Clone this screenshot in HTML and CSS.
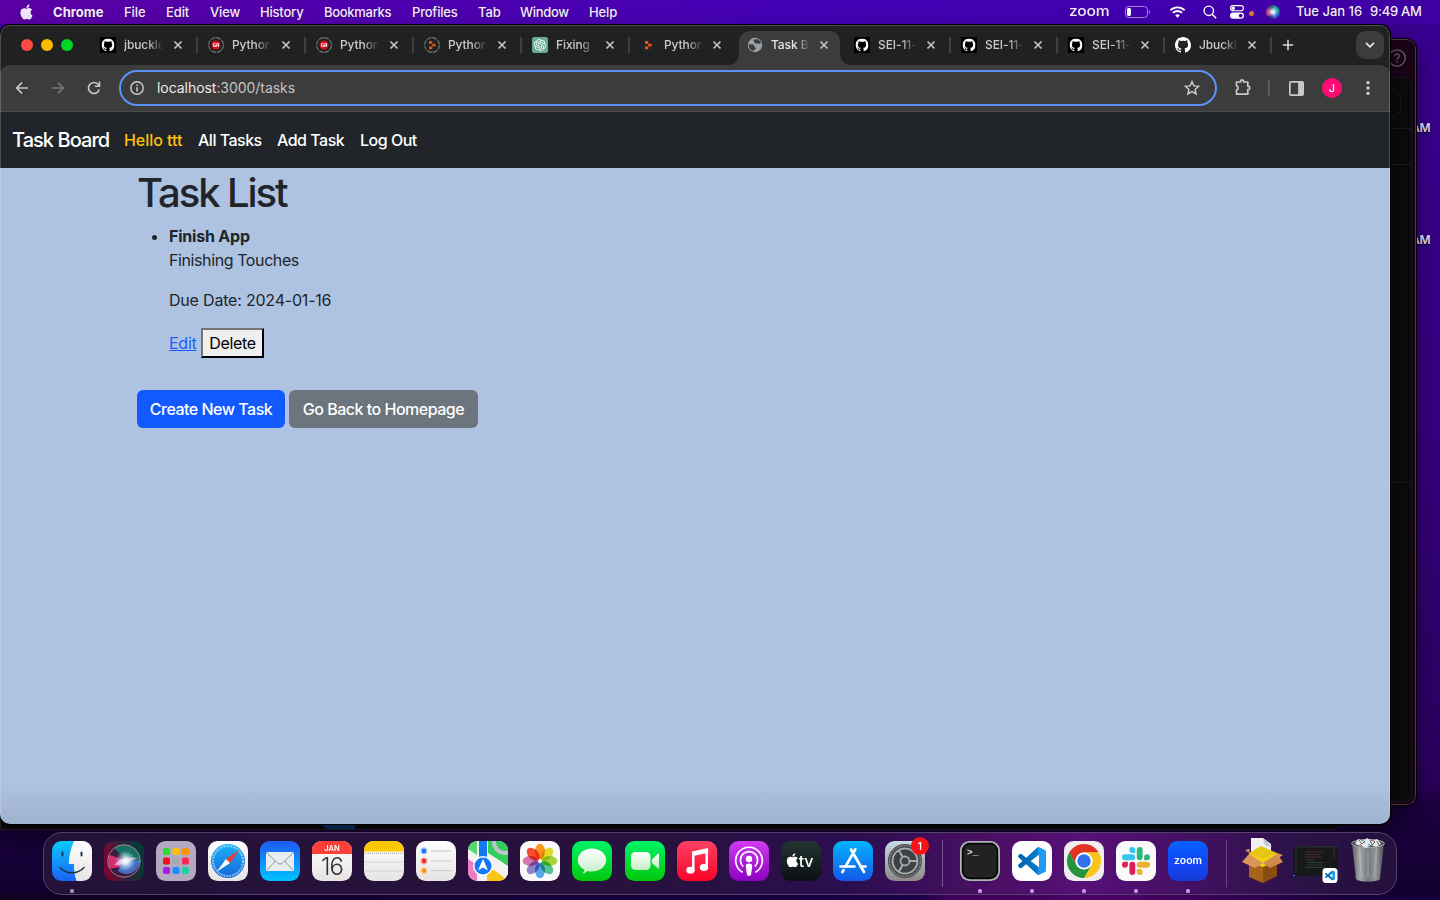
FILE: index.html
```html
<!DOCTYPE html>
<html lang="en">
<head>
<meta charset="utf-8">
<title>Task Board</title>
<link rel="stylesheet" href="styles.css">
</head>
<body>
<svg class="defs" width="0" height="0" aria-hidden="true">
  <defs>
    <symbol id="apple" viewBox="0 0 24 24"><path d="M12.152 6.896c-.948 0-2.415-1.078-3.96-1.04-2.04.027-3.91 1.183-4.961 3.014-2.117 3.675-.546 9.103 1.519 12.09 1.013 1.454 2.208 3.09 3.792 3.039 1.52-.065 2.09-.987 3.935-.987 1.831 0 2.35.987 3.96.948 1.637-.026 2.676-1.48 3.676-2.948 1.156-1.688 1.636-3.325 1.662-3.415-.039-.013-3.182-1.221-3.22-4.857-.026-3.04 2.48-4.494 2.597-4.559-1.429-2.09-3.623-2.324-4.39-2.376-2-.156-3.675 1.09-4.61 1.09zM15.53 3.83c.843-1.012 1.4-2.427 1.245-3.83-1.207.052-2.662.805-3.532 1.818-.78.896-1.454 2.338-1.273 3.714 1.338.104 2.715-.688 3.559-1.701"/></symbol>
    <symbol id="github" viewBox="0 0 16 16"><path d="M8 0C3.58 0 0 3.58 0 8c0 3.54 2.29 6.53 5.47 7.59.4.07.55-.17.55-.38 0-.19-.01-.82-.01-1.49-2.01.37-2.53-.49-2.69-.94-.09-.23-.48-.94-.82-1.13-.28-.15-.68-.52-.01-.53.63-.01 1.08.58 1.23.82.72 1.21 1.87.87 2.33.66.07-.52.28-.87.51-1.07-1.78-.2-3.64-.89-3.64-3.95 0-.87.31-1.59.82-2.15-.08-.2-.36-1.02.08-2.12 0 0 .67-.21 2.2.82.64-.18 1.32-.27 2-.27.68 0 1.36.09 2 .27 1.53-1.04 2.2-.82 2.2-.82.44 1.1.16 1.92.08 2.12.51.56.82 1.27.82 2.15 0 3.07-1.87 3.75-3.65 3.95.29.25.54.73.54 1.48 0 1.07-.01 1.93-.01 2.2 0 .21.15.46.55.38A8.013 8.013 0 0016 8c0-4.42-3.58-8-8-8z"/></symbol>
    <symbol id="gh-tile" viewBox="0 0 16 16"><rect width="16" height="16" fill="#000"/><svg x="1.5" y="1.5" width="13" height="13" viewBox="0 0 16 16"><use href="#github" fill="#fff"/></svg></symbol>
    <symbol id="ga" viewBox="0 0 16 16"><circle cx="8" cy="8" r="7.4" fill="none" stroke="#747775" stroke-width="1.1" stroke-dasharray="4.9 .91"/><circle cx="8" cy="8" r="4.500" fill="#d8101c"/><path d="M7.4 6.6H5.6v2.9h1.9V8.2H6.7M8.7 9.9V6.5h1.8v3.4M8.7 8.4h1.8" fill="none" stroke="#fff" stroke-width=".8"/></symbol>
    <symbol id="replit" viewBox="0 0 16 16"><path d="M5 4h3.2v2.8H5zM8.2 6.8h3.3v2.7H8.2zM5 9.5h3.2v2.8H5z"/></symbol>
    <symbol id="replit-load" viewBox="0 0 16 16"><circle cx="8" cy="8" r="7.4" fill="none" stroke="#747775" stroke-width="1.1" stroke-dasharray="4.9 .91"/><use href="#replit" fill="#d9560f"/></symbol>
    <symbol id="replit-dark" viewBox="0 0 16 16"><circle cx="8" cy="8" r="7.8" fill="#222325"/><use href="#replit" fill="#f2560d"/></symbol>
    <symbol id="openai" viewBox="-4 -4 32 32"><rect x="-4" y="-4" width="32" height="32" rx="5" fill="#6aab98"/><path fill="#fff" d="M22.2819 9.8211a5.9847 5.9847 0 0 0-.5157-4.9108 6.0462 6.0462 0 0 0-6.5098-2.9A6.0651 6.0651 0 0 0 4.9807 4.1818a5.9847 5.9847 0 0 0-3.9977 2.9 6.0462 6.0462 0 0 0 .7427 7.0966 5.98 5.98 0 0 0 .511 4.9107 6.051 6.051 0 0 0 6.5146 2.9001A5.9847 5.9847 0 0 0 13.2599 24a6.0557 6.0557 0 0 0 5.7718-4.2058 5.9894 5.9894 0 0 0 3.9977-2.9001 6.0557 6.0557 0 0 0-.7475-7.0729zm-9.022 12.6081a4.4755 4.4755 0 0 1-2.8764-1.0408l.1419-.0804 4.7783-2.7582a.7948.7948 0 0 0 .3927-.6813v-6.7369l2.02 1.1686a.071.071 0 0 1 .038.052v5.5826a4.504 4.504 0 0 1-4.4945 4.4944zm-9.6607-4.1254a4.4708 4.4708 0 0 1-.5346-3.0137l.142.0852 4.783 2.7582a.7712.7712 0 0 0 .7806 0l5.8428-3.3685v2.3324a.0804.0804 0 0 1-.0332.0615L9.74 19.9502a4.4992 4.4992 0 0 1-6.1408-1.6464zM2.3408 7.8956a4.485 4.485 0 0 1 2.3655-1.9728V11.6a.7664.7664 0 0 0 .3879.6765l5.8144 3.3543-2.0201 1.1685a.0757.0757 0 0 1-.071 0l-4.8303-2.7865A4.504 4.504 0 0 1 2.3408 7.872zm16.5963 3.8558L13.1038 8.364 15.1192 7.2a.0757.0757 0 0 1 .071 0l4.8303 2.7913a4.4944 4.4944 0 0 1-.6765 8.1042v-5.6772a.79.79 0 0 0-.407-.667zm2.0107-3.0231l-.142-.0852-4.7735-2.7818a.7759.7759 0 0 0-.7854 0L9.409 9.2297V6.8974a.0662.0662 0 0 1 .0284-.0615l4.8303-2.7866a4.4992 4.4992 0 0 1 6.6802 4.66zM8.3065 12.863l-2.02-1.1638a.0804.0804 0 0 1-.038-.0567V6.0742a4.4992 4.4992 0 0 1 7.3757-3.4537l-.142.0805L8.704 5.459a.7948.7948 0 0 0-.3927.6813zm1.0976-2.3654l2.602-1.4998 2.6069 1.4998v2.9994l-2.5974 1.4997-2.6067-1.4997Z"/></symbol>
    <symbol id="globe" viewBox="0 0 16 16"><circle cx="8" cy="8" r="7.2" fill="#9aa0a8"/><path d="M8.700 2.200c-2 0-2.800 1-1.600 2.200 1 1 0 1.800 1.300 2.300 1.300.4 1.200-.9 2.600-.2 1 .6 1.500.1 2.700.3l-.3-2.200-2.200-2z" fill="#3c3c3c"/><path d="M2 6.900c1.500.7 4.700.1 5.300 1.600.3 1-.2 1.400.9 1.900 1.200.6.300 1.900-.5 2.200-.8.500-.4 1.300-1.200 1.500C3.700 13.300 1.900 11 1.800 8.200z" fill="#3c3c3c"/></symbol>
    <symbol id="close" viewBox="0 0 10 10"><path d="M1.5 1.5l7 7M8.5 1.5l-7 7" stroke="#c7c7c7" stroke-width="1.6" fill="none"/></symbol>
    <linearGradient id="vsg" x1="0" x2="1"><stop offset="0" stop-color="#0065a9"/><stop offset=".68" stop-color="#007acc"/><stop offset=".76" stop-color="#1f9cf0"/></linearGradient>
    <symbol id="vscode" viewBox="0 0 24 24"><path fill="url(#vsg)" d="M23.15 2.587L18.21.21a1.494 1.494 0 0 0-1.705.29l-9.46 8.63-4.12-3.128a.999.999 0 0 0-1.276.057L.327 7.261A1 1 0 0 0 .326 8.74L3.899 12 .326 15.26a1 1 0 0 0 .001 1.479L1.65 17.94a.999.999 0 0 0 1.276.057l4.12-3.128 9.46 8.63a1.492 1.492 0 0 0 1.704.29l4.942-2.377A1.5 1.5 0 0 0 24 20.06V3.939a1.5 1.5 0 0 0-.85-1.352zm-5.146 14.861L10.826 12l7.178-5.448v10.896z"/></symbol>
    <radialGradient id="siriOrb"><stop offset="0" stop-color="#fff"/><stop offset=".3" stop-color="#b9d9f5"/><stop offset=".65" stop-color="#8a5fb0" stop-opacity=".6"/><stop offset="1" stop-color="#222" stop-opacity="0"/></radialGradient>
    <radialGradient id="siriGlow"><stop offset="0" stop-color="#fff"/><stop offset=".3" stop-color="#e8fbff" stop-opacity=".85"/><stop offset="1" stop-color="#9fe4ff" stop-opacity="0"/></radialGradient>
    <linearGradient id="siriBg" x1="0" x2="1" y1=".3" y2=".1"><stop offset="0" stop-color="#7c0530"/><stop offset=".5" stop-color="#25283a"/><stop offset="1" stop-color="#013c36"/></linearGradient>
    <linearGradient id="lightV" x1="0" x2="0" y1="0" y2="1"><stop offset="0" stop-color="#fff"/><stop offset="1" stop-color="#e6e4e2"/></linearGradient>
    <linearGradient id="finderB" x1="0" x2="0" y1="0" y2="1"><stop offset="0" stop-color="#08c8fb"/><stop offset="1" stop-color="#1a63f7"/></linearGradient>
    <linearGradient id="safariB" x1="0" x2="0" y1="0" y2="1"><stop offset="0" stop-color="#1ab0f5"/><stop offset="1" stop-color="#1268dc"/></linearGradient>
    <linearGradient id="mailB" x1="0" x2="0" y1="0" y2="1"><stop offset="0" stop-color="#1e5bf3"/><stop offset="1" stop-color="#02c1fd"/></linearGradient>
    <linearGradient id="greenV" x1="0" x2="0" y1="0" y2="1"><stop offset="0" stop-color="#00f468"/><stop offset="1" stop-color="#02c80d"/></linearGradient>
    <linearGradient id="musicV" x1="0" x2="0" y1="0" y2="1"><stop offset="0" stop-color="#fd4263"/><stop offset="1" stop-color="#fa0328"/></linearGradient>
    <linearGradient id="podV" x1="0" x2="0" y1="0" y2="1"><stop offset="0" stop-color="#d23bf3"/><stop offset="1" stop-color="#8a02c0"/></linearGradient>
    <linearGradient id="tvV" x1="0" x2="0" y1="0" y2="1"><stop offset="0" stop-color="#243533"/><stop offset="1" stop-color="#0b1011"/></linearGradient>
    <linearGradient id="storeV" x1="0" x2="0" y1="0" y2="1"><stop offset="0" stop-color="#01b4fb"/><stop offset="1" stop-color="#1458ec"/></linearGradient>
    <linearGradient id="setV" x1="0" x2="0" y1="0" y2="1"><stop offset="0" stop-color="#c8dbe5"/><stop offset="1" stop-color="#8e8886"/></linearGradient>
    <linearGradient id="zoomV" x1="0" x2="0" y1="0" y2="1"><stop offset="0" stop-color="#0563fc"/><stop offset=".5" stop-color="#1148fa"/><stop offset="1" stop-color="#163ad6"/></linearGradient>
    <linearGradient id="canV" x1="0" x2="1"><stop offset="0" stop-color="#5c6064"/><stop offset=".25" stop-color="#a4a8aa"/><stop offset=".5" stop-color="#74787b"/><stop offset=".75" stop-color="#93979a"/><stop offset="1" stop-color="#4c5054"/></linearGradient>
    <linearGradient id="bubbleV" x1="0" x2="0" y1="0" y2="1"><stop offset="0" stop-color="#fff"/><stop offset="1" stop-color="#c3efc5"/></linearGradient>
    <clipPath id="tile"><rect width="40" height="40" rx="9.5"/></clipPath>
    <clipPath id="orb"><circle cx="20" cy="20" r="16.500"/></clipPath>
    <path id="chromeSeg" d="M0-8.5H14.72A17 17 0 0 0-14.72-8.5L-7.36 4.25A8.5 8.5 0 0 1 0-8.5Z"/>
    <path id="slackArm" d="M8.834 6.313a2.528 2.528 0 0 1 2.521 2.521 2.528 2.528 0 0 1-2.521 2.522H2.522A2.528 2.528 0 0 1 0 8.834a2.528 2.528 0 0 1 2.522-2.521h6.312zM8.834 5.042a2.528 2.528 0 0 1-2.521-2.52A2.528 2.528 0 0 1 8.834 0a2.528 2.528 0 0 1 2.521 2.522v2.52H8.834z"/>
  </defs>
</svg>

<div class="desktop">
  <span class="file-label file-label-1">AM</span>
  <span class="file-label file-label-2">AM</span>

  <div class="slack-window">
    <svg class="help" viewBox="0 0 18 18"><circle cx="9" cy="9" r="8.2" fill="none" stroke="#6d6469" stroke-width="1.3"/><path d="M6.700 7.200a2.300 2.300 0 1 1 3.500 1.900c-.8.500-1.200.8-1.200 1.700" fill="none" stroke="#6d6469" stroke-width="1.3"/><circle cx="9" cy="12.8" r=".9" fill="#6d6469"/></svg>
    <div class="slack-pane"><i class="pane-a"></i><i class="pane-b"></i><i class="pane-c"></i></div>
  </div>
  <div class="under-window"><i></i></div>

  <header class="menubar">
    <svg class="apple-logo" fill="#efe6fa"><use href="#apple"/></svg>
    <nav class="menus">
      <b class="m-chrome">Chrome</b><span class="m-file">File</span><span class="m-edit">Edit</span><span class="m-view">View</span><span class="m-history">History</span><span class="m-bookmarks">Bookmarks</span><span class="m-profiles">Profiles</span><span class="m-tab">Tab</span><span class="m-window">Window</span><span class="m-help">Help</span>
    </nav>
    <div class="status">
      <span class="zoom-word"><span>zoom</span></span>
      <svg class="battery" viewBox="0 0 26 12"><rect x=".5" y=".5" width="22" height="11" rx="3.2" fill="none" stroke="#a287dc"/><rect x="2" y="2" width="4" height="8" rx="1.4" fill="#fff"/><path d="M24 4v4c1.3-.4 1.3-3.600 0-4z" fill="#a287dc"/></svg>
      <svg class="wifi" viewBox="0 0 16 12"><path d="M.9 4.300a10.200 10.200 0 0 1 14.200 0M3.400 6.900a6.600 6.600 0 0 1 9.200 0" fill="none" stroke="#fff" stroke-width="1.900"/><path d="M8 11.800 5.700 9.400a3.300 3.300 0 0 1 4.600 0z" fill="#fff"/></svg>
      <svg class="search" viewBox="0 0 14 14"><circle cx="5.800" cy="5.800" r="4.700" fill="none" stroke="#fff" stroke-width="1.400"/><path d="m9.200 9.200 4 4" stroke="#fff" stroke-width="1.600"/></svg>
      <svg class="control" viewBox="0 0 14 14"><rect x=".600" y=".600" width="12.800" height="5.200" rx="2.600" fill="none" stroke="#fff" stroke-width="1.100"/><circle cx="3.300" cy="3.200" r="1.700" fill="#fff"/><rect y="7.400" width="14" height="6.400" rx="3.200" fill="#fff"/><circle cx="10.700" cy="10.600" r="1.900" fill="#4600ad"/></svg>
      <i class="mic-dot"></i>
      <svg class="siri-mini" viewBox="0 0 14 14"><circle cx="7" cy="7" r="6.800" fill="#38307d"/><path d="M7 7 1.500 3A6.800 6.800 0 0 1 7 .200z" fill="#4b4a78"/><path d="M7 7V.200A6.800 6.800 0 0 1 13.800 7z" fill="#0f9f9a"/><path d="M7 7l-5 4.500A6.800 6.800 0 0 1 1.500 3z" fill="#d03a8c"/><path d="M7 7h6.800A6.800 6.800 0 0 1 7 13.800z" fill="#2d63c9"/><circle cx="7" cy="7" r="5.500" fill="url(#siriGlow)"/></svg>
      <span class="date">Tue Jan 16</span><span class="time">9:49 AM</span>
    </div>
  </header>

  <main class="browser">
    <div class="tabstrip">
      <div class="lights"><i class="red"></i><i class="yellow"></i><i class="green"></i></div>
      <div class="tabs">
        <div class="tab wide"><svg class="fav"><use href="#gh-tile"/></svg><span class="title">jbuckle</span><svg class="x"><use href="#close"/></svg></div>
        <div class="tab wide"><svg class="fav"><use href="#ga"/></svg><span class="title">Python</span><svg class="x"><use href="#close"/></svg></div>
        <div class="tab wide"><svg class="fav"><use href="#ga"/></svg><span class="title">Python</span><svg class="x"><use href="#close"/></svg></div>
        <div class="tab wide"><svg class="fav"><use href="#replit-load"/></svg><span class="title">Python</span><svg class="x"><use href="#close"/></svg></div>
        <div class="tab wide"><svg class="fav"><use href="#openai"/></svg><span class="title">Fixing</span><svg class="x"><use href="#close"/></svg></div>
        <div class="tab plain"><svg class="fav"><use href="#replit-dark"/></svg><span class="title">Python</span><svg class="x"><use href="#close"/></svg></div>
        <div class="tab active"><svg class="fav"><use href="#globe"/></svg><span class="title">Task B</span><svg class="x"><use href="#close"/></svg></div>
        <div class="tab"><svg class="fav"><use href="#gh-tile"/></svg><span class="title">SEI-11-</span><svg class="x"><use href="#close"/></svg></div>
        <div class="tab"><svg class="fav"><use href="#gh-tile"/></svg><span class="title">SEI-11-</span><svg class="x"><use href="#close"/></svg></div>
        <div class="tab"><svg class="fav"><use href="#gh-tile"/></svg><span class="title">SEI-11-</span><svg class="x"><use href="#close"/></svg></div>
        <div class="tab"><svg class="fav" fill="#fff"><use href="#github"/></svg><span class="title">Jbuckl</span><svg class="x"><use href="#close"/></svg></div>
      </div>
      <svg class="plus" viewBox="0 0 12 12"><path d="M6 .800v10.400M.800 6h10.400" stroke="#d5d5d5" stroke-width="1.600"/></svg>
      <div class="tab-search"><svg viewBox="0 0 10 6"><path d="m1 .800 4 4 4-4" fill="none" stroke="#e3e3e3" stroke-width="1.800"/></svg></div>
    </div>
    <div class="toolbar">
      <svg class="ti back" viewBox="0 0 16 16"><path d="M14 8H2.800M8 2.600 2.600 8 8 13.400" fill="none" stroke="#c9c9c9" stroke-width="1.600"/></svg>
      <svg class="ti fwd" viewBox="0 0 16 16"><path d="M2 8h11.200M8 2.600 13.400 8 8 13.400" fill="none" stroke="#777" stroke-width="1.600"/></svg>
      <svg class="ti reload" viewBox="0 0 16 16"><path d="M13.300 9.400a5.500 5.500 0 1 1-1.300-5.200l1.300 1.300" fill="none" stroke="#c9c9c9" stroke-width="1.600"/><path d="M13.500 1.600v4.600H8.900" fill="none" stroke="#c9c9c9" stroke-width="1.600"/></svg>
      <div class="omnibox">
        <svg class="info" viewBox="0 0 14 14"><circle cx="7" cy="7" r="6.200" fill="none" stroke="#d0d0d0" stroke-width="1.400"/><path d="M7 6.200v4.200M7 3.500v1.500" stroke="#d0d0d0" stroke-width="1.500"/></svg>
        <span class="url"><em>localhost</em>:3000/tasks</span>
        <svg class="star" viewBox="0 0 16 16"><path d="m8 1.600 1.900 4.300 4.700.400-3.500 3.100 1 4.600L8 11.600 3.900 14l1-4.600-3.500-3.100 4.700-.400z" fill="none" stroke="#c9c9c9" stroke-width="1.500"/></svg>
      </div>
      <svg class="puzzle" viewBox="0 0 18 18"><path d="M2.500 4h4.100V3.200c0-1.800 3-1.800 3 0V4h4.200v4.300h.6c1.900 0 1.900 3.200 0 3.200h-.6v4.700H2.500v-4.400c2.400-.2 2.400-3.500 0-3.700z" fill="none" stroke="#c9c9c9" stroke-width="1.700" stroke-linejoin="round"/></svg>
      <i class="tb-sep"></i>
      <svg class="panel" viewBox="0 0 14 14"><rect x=".800" y=".800" width="12.400" height="12.400" rx="1" fill="none" stroke="#c9c9c9" stroke-width="1.600"/><path d="M8.500 1H13v12H8.500z" fill="#c9c9c9"/></svg>
      <span class="avatar">J</span>
      <svg class="dots" viewBox="0 0 4 16"><g fill="#d0d0d0"><circle cx="2" cy="2.600" r="1.700"/><circle cx="2" cy="8" r="1.700"/><circle cx="2" cy="13.400" r="1.700"/></g></svg>
    </div>
    <section class="page">
      <nav class="navbar">
        <a class="brand">Task Board</a><a class="hello">Hello ttt</a><a class="n-all">All Tasks</a><a class="n-add">Add Task</a><a class="n-out">Log Out</a>
      </nav>
      <div class="container">
        <h1>Task List</h1>
        <ul>
          <li>
            <strong>Finish App</strong>
            <p class="desc">Finishing Touches</p>
            <p class="due">Due Date: 2024-01-16</p>
            <div class="actions"><a class="edit">Edit</a><button class="delete">Delete</button></div>
          </li>
        </ul>
        <div class="buttons"><a class="btn primary">Create New Task</a><a class="btn secondary">Go Back to Homepage</a></div>
      </div>
    </section>
  </main>

  <footer class="dock">
    <div class="app run"><svg viewBox="0 0 40 40"><g clip-path="url(#tile)"><rect width="40" height="40" fill="url(#finderB)"/><path d="M22 0c-3 7-5 14-5.200 23H22c0 6 .5 12 2.500 17H40V0z" fill="url(#lightV)"/></g><path d="M10.500 11.500v3M29.500 11.500v3" stroke="#17304d" stroke-width="1.900" stroke-linecap="round"/><path d="M8 26.500c6 7 18 7 24 0" fill="none" stroke="#20303f" stroke-width="1.300" stroke-linecap="round"/></svg></div>
    <div class="app"><svg viewBox="0 0 40 40"><rect width="40" height="40" rx="9.500" fill="url(#siriBg)"/><g clip-path="url(#orb)"><rect width="40" height="40" fill="#3a1c3c"/><path d="M8 4h28v18C26 20 14 14 8 4z" fill="#0e8a6c" opacity=".75"/><path d="M4 14c6 0 12 4 17 7-4 5-9 7-16 6z" fill="#f0307a" opacity=".85"/><path d="M14 30c2-7 8-10 22-11-1 12-12 18-22 11z" fill="#4a86f0" opacity=".75"/><path d="M10 24c5-6 13-9 25-7-7 1-14 8-25 7z" fill="#ffb0d8" opacity=".8"/><circle cx="21.500" cy="20" r="10.500" fill="url(#siriGlow)"/></g><circle cx="20" cy="20" r="16.300" fill="none" stroke="#c08fa5" stroke-width=".8"/></svg></div>
    <div class="app"><svg viewBox="0 0 40 40"><rect width="40" height="40" rx="9.500" fill="#b2aac0"/><g><rect x="7" y="7" width="7" height="7" rx="1.800" fill="#28e02b"/><rect x="16.500" y="7" width="7" height="7" rx="1.800" fill="#ffc400"/><rect x="26" y="7" width="7" height="7" rx="1.800" fill="#ff9100"/><rect x="7" y="16.500" width="7" height="7" rx="1.800" fill="#f50f1c"/><rect x="16.500" y="16.500" width="7" height="7" rx="1.800" fill="#a6aaad"/><rect x="26" y="16.500" width="7" height="7" rx="1.800" fill="#ff2758"/><rect x="7" y="26" width="7" height="7" rx="1.800" fill="#a91ee0"/><rect x="16.500" y="26" width="7" height="7" rx="1.800" fill="#1b8dff"/><rect x="26" y="26" width="7" height="7" rx="1.800" fill="#1dd0a5"/></g></svg></div>
    <div class="app"><svg viewBox="0 0 40 40"><rect width="40" height="40" rx="9.500" fill="url(#lightV)"/><circle cx="20" cy="20" r="17" fill="url(#safariB)"/><circle cx="20" cy="20" r="15" fill="none" stroke="#fff" stroke-width="2.200" stroke-dasharray=".5 1.070"/><path d="M31.500 9 22 22l-4-4z" fill="#f5392f"/><path d="M8.500 31 18 18l4 4z" fill="#fff"/></svg></div>
    <div class="app"><svg viewBox="0 0 40 40"><rect width="40" height="40" rx="9.500" fill="url(#mailB)"/><rect x="6" y="11" width="28" height="19" rx="1.500" fill="#e8ecf0"/><path d="m6.500 11.500 11 10.500c1.500 1.300 3.500 1.300 5 0l11-10.500M6.500 29.500l9-9.500M33.500 29.500l-9-9.500" fill="none" stroke="#868d94" stroke-width=".9"/></svg></div>
    <div class="app"><svg viewBox="0 0 40 40"><g clip-path="url(#tile)"><rect width="40" height="40" fill="url(#lightV)"/><rect width="40" height="13" fill="#fa4038"/></g><text x="20" y="9.700" class="cal-m">JAN</text><text x="20" y="33.500" class="cal-d">16</text></svg></div>
    <div class="app"><svg viewBox="0 0 40 40"><g clip-path="url(#tile)"><rect width="40" height="40" fill="url(#lightV)"/><rect width="40" height="10.500" fill="#fdc700"/><path d="M0 12.300h40" stroke="#999" stroke-width="1" stroke-dasharray="1 1"/><path d="M0 21h40M0 30h40" stroke="#d1ceca" stroke-width=".8"/></g></svg></div>
    <div class="app"><svg viewBox="0 0 40 40"><rect width="40" height="40" rx="9.500" fill="url(#lightV)"/><path d="M15 10h20.500M15 20h20.500M15 29.700h20.500" stroke="#c7c7c7" stroke-width="1"/><g fill="#fff"><circle cx="8" cy="10" r="3.200" stroke="#a4c6f2"/><circle cx="8" cy="20" r="3.200" stroke="#f0a4a4"/><circle cx="8" cy="29.700" r="3.200" stroke="#f4cc99"/></g><circle cx="8" cy="10" r="2.400" fill="#1479f5"/><circle cx="8" cy="20" r="2.400" fill="#f42b2b"/><circle cx="8" cy="29.700" r="2.400" fill="#f9931c"/></svg></div>
    <div class="app"><svg viewBox="0 0 40 40"><g clip-path="url(#tile)"><rect width="40" height="40" fill="#f4f2ee"/><path d="M20 0h20v25L20 12z" fill="#30cf5b"/><path d="M0 8V0h9v14z" fill="#52da72"/><path d="M0 18l9 6v16H0z" fill="#ef7bc4"/><path d="M19 40V30l4-3 17 12v1z" fill="#fcc419"/><path d="M28 24l12 8v8L26 28z" fill="#f4f2ee"/><path d="M26 16 40 26v8L20 19z" fill="#f4f2ee"/><path d="M11 0h8v24h-8z" fill="#1578f3"/><circle cx="37" cy="1" r="11" fill="none" stroke="#bfc2c4" stroke-width="4"/></g><circle cx="15" cy="25" r="10" fill="#fff"/><circle cx="15" cy="25" r="8.500" fill="#1477fa"/><path d="m15 18 5 11.500-5-3-5 3z" fill="#fff"/></svg></div>
    <div class="app"><svg viewBox="0 0 40 40"><rect width="40" height="40" rx="9.500" fill="#fbfafa"/><g class="petals"><ellipse cx="20" cy="10.500" rx="5" ry="7.800" fill="#ff9a1e"/><ellipse cx="20" cy="10.500" rx="5" ry="7.800" fill="#e5df25" transform="rotate(45 20 20)"/><ellipse cx="20" cy="10.500" rx="5" ry="7.800" fill="#a7d93a" transform="rotate(90 20 20)"/><ellipse cx="20" cy="10.500" rx="5" ry="7.800" fill="#55c794" transform="rotate(135 20 20)"/><ellipse cx="20" cy="10.500" rx="5" ry="7.800" fill="#5cabea" transform="rotate(180 20 20)"/><ellipse cx="20" cy="10.500" rx="5" ry="7.800" fill="#9286cf" transform="rotate(225 20 20)"/><ellipse cx="20" cy="10.500" rx="5" ry="7.800" fill="#d67bb5" transform="rotate(270 20 20)"/><ellipse cx="20" cy="10.500" rx="5" ry="7.800" fill="#fb4d35" transform="rotate(315 20 20)"/></g></svg></div>
    <div class="app"><svg viewBox="0 0 40 40"><rect width="40" height="40" rx="9.500" fill="url(#greenV)"/><path d="M20 7.500c8 0 14.200 5 14.200 11.500S28 30.500 20 30.500c-1.600 0-3-.200-4.400-.600-1.300 1.200-3 2.300-5 2.700 1.200-1.200 1.800-2.500 1.800-4C8.300 26.500 5.800 23 5.800 19 5.800 12.500 12 7.500 20 7.500z" fill="url(#bubbleV)"/></svg></div>
    <div class="app"><svg viewBox="0 0 40 40"><rect width="40" height="40" rx="9.500" fill="url(#greenV)"/><rect x="6" y="11" width="19.500" height="18" rx="4.500" fill="url(#bubbleV)"/><path d="M27 18.500l5.800-5.800c.6-.5 1.200-.3 1.200.5v13.600c0 .8-.6 1-1.200.5L27 22z" fill="url(#bubbleV)"/></svg></div>
    <div class="app"><svg viewBox="0 0 40 40"><rect width="40" height="40" rx="9.500" fill="url(#musicV)"/><path d="M15 10.500 31 7v4.800l-13.500 3V29h-2.500z" fill="#fff"/><path d="M28.500 9H31v17h-2.500z" fill="#fff"/><ellipse cx="13.500" cy="29.200" rx="4.200" ry="3.400" fill="#fff"/><ellipse cx="27" cy="26.500" rx="4.200" ry="3.400" fill="#fff"/></svg></div>
    <div class="app"><svg viewBox="0 0 40 40"><rect width="40" height="40" rx="9.500" fill="url(#podV)"/><g fill="none" stroke="#fff" stroke-width="1.700"><path d="M13.600 31.200a13.300 13.300 0 1 1 12.800 0"/><path d="M14.300 25.600a8.600 8.600 0 1 1 11.400 0"/></g><circle cx="20" cy="18" r="3.200" fill="#fff"/><path d="M16.800 25c0-3.200 6.400-3.200 6.400 0l-1 8c-.3 2.500-4.100 2.500-4.400 0z" fill="#fff"/></svg></div>
    <div class="app"><svg viewBox="0 0 40 40"><rect width="40" height="40" rx="9.500" fill="url(#tvV)"/><svg x="4.500" y="12" width="14" height="14.500" viewBox="0 0 24 24" fill="#fff"><use href="#apple"/></svg><text x="17.800" y="26.300" class="tv">tv</text></svg></div>
    <div class="app"><svg viewBox="0 0 40 40"><rect width="40" height="40" rx="9.500" fill="url(#storeV)"/><g fill="none" stroke="#fff" stroke-width="2.700" stroke-linecap="round"><path d="M18 8.500 31 31M22.300 8.500 12.500 25.500M7.500 25.500h14M27.500 25.500h5M10.500 29.200 9.400 31"/></g></svg></div>
    <div class="app"><svg viewBox="0 0 40 40"><rect width="40" height="40" rx="9.500" fill="url(#setV)"/><circle cx="20" cy="20" r="17" fill="#3c4144"/><circle cx="20" cy="20" r="15.500" fill="none" stroke="#8f9395" stroke-width="1.600" stroke-dasharray="1 .700"/><circle cx="20" cy="20" r="12.500" fill="none" stroke="#a5a9aa" stroke-width="2"/><circle cx="20" cy="20" r="4.500" fill="none" stroke="#a5a9aa" stroke-width="1.800"/><path d="M25 20h7M17.500 15.700l-4-6.900M17.500 24.300l-4 6.900" stroke="#a5a9aa" stroke-width="2.200"/></svg><b class="badge">1</b></div>
    <i class="sep sep-a"></i>
    <div class="app run"><svg viewBox="0 0 40 40"><rect width="40" height="40" rx="9.500" fill="#aeb4b6"/><rect x="1.800" y="1.800" width="36.400" height="36.400" rx="8" fill="#040404"/><rect x="3.500" y="3.500" width="33" height="33" rx="6" fill="#222"/><text x="7" y="14" class="term">&gt;_</text></svg></div>
    <div class="app run"><svg viewBox="0 0 40 40"><rect width="40" height="40" rx="9.500" fill="#fff"/><svg x="6" y="6" width="28" height="28" viewBox="0 0 24 24"><use href="#vscode"/></svg></svg></div>
    <div class="app run"><svg viewBox="0 0 40 40"><rect width="40" height="40" rx="9.500" fill="#efedee"/><g transform="translate(20 20)"><use href="#chromeSeg" fill="#e33325"/><use href="#chromeSeg" fill="#fcc31a" transform="rotate(120)"/><use href="#chromeSeg" fill="#23953f" transform="rotate(240)"/><circle r="8.500" fill="#fff"/><circle r="6.700" fill="#2f72ec"/></g></svg></div>
    <div class="app run"><svg viewBox="0 0 40 40"><rect width="40" height="40" rx="9.500" fill="#fbfafa"/><g transform="translate(6 6) scale(1.167)"><use href="#slackArm" fill="#36c5f0"/><use href="#slackArm" fill="#2eb67d" transform="rotate(90 12 12)"/><use href="#slackArm" fill="#ecb22e" transform="rotate(180 12 12)"/><use href="#slackArm" fill="#e01e5a" transform="rotate(270 12 12)"/></g></svg></div>
    <div class="app run"><svg viewBox="0 0 40 40"><rect width="40" height="40" rx="9.500" fill="url(#zoomV)"/><text x="20" y="22.800" class="zoom-app" textLength="28" lengthAdjust="spacingAndGlyphs">zoom</text></svg></div>
    <i class="sep sep-b"></i>
    <div class="app"><svg class="big" viewBox="0 0 44 48"><path d="M10 2h12l8 6v14H10z" fill="#eef0f2"/><path d="M22 2l2 7 7 2z" fill="#bcc1c6"/><path d="M8 23 22 29v18L8 41z" fill="#a8651a"/><path d="M22 29l14-7v18L22 47z" fill="#8b4d0f"/><path d="m8 17 12-7 16 7-14 9z" fill="#e8c512"/><path d="m8 17 14 6v8L8 26zM36 17l-14 6v8l14-7z" fill="#f2d31a"/><path d="M8 18 1 26l13 6 8-5z" fill="#d99758"/><path d="m36 18 6 8-13 6-7-5z" fill="#cf8a4a"/><path d="m36 17 6 2-6 4zM8 17l-4-3 5-1z" fill="#d99758"/></svg></div>
    <div class="app"><svg class="thumb" viewBox="0 0 46 40"><rect x="1" y="5" width="45" height="30" fill="#171819"/><path d="M1 5h45v1.500H1z" fill="#2a2b2d"/><path d="M4 8v24" stroke="#4b4d50" stroke-dasharray="1 1.500"/><path d="M13 11h18M13 13.500h15M13 16h17" stroke="#5c322e" stroke-width=".8"/><path d="M13 19h9M15 21.500h17M15 24h15M13 26.500h20" stroke="#2d4a31" stroke-width=".8"/><path d="M42 8v10" stroke="#6e4545" stroke-dasharray="1 1"/><rect x="1" y="34" width="2" height="1" fill="#0a84ff"/><rect x="30.500" y="27" width="15" height="15" rx="3.500" fill="#fff"/><svg x="33" y="29.500" width="10" height="10" viewBox="0 0 24 24"><use href="#vscode"/></svg></svg></div>
    <div class="app"><svg class="bin" viewBox="0 0 36 46"><path d="M2 6h32l-4 36c-2 3.500-22 3.500-24 0z" fill="url(#canV)"/><ellipse cx="18" cy="6.500" rx="16.500" ry="4" fill="#4b5053" stroke="#a7acae"/><path d="m5 7 3-5 5 2 4-3 5 3 5-2 4 5-5 3-5-2-5 3-5-2z" fill="#e6e8e9"/><path d="m9 3 3 4 3-3M20 3l2 5 3-3M27 4l2 4" stroke="#59656b" fill="none"/><path d="m10 7 2 2M23 4l2 1" stroke="#c54032"/><path d="m13 5 2 1M18 8l2-1" stroke="#2899bb"/><path d="M9 12l3 28M18 13v28M27 12l-3 28" stroke="#d5d8da" stroke-opacity=".25" stroke-width="2"/></svg></div>
  </footer>
</div>
</body>
</html>
```
FILE: styles.css
```css
* { box-sizing: border-box; }
body { margin: 0; font-family: Inter, "Liberation Sans", sans-serif; overflow: hidden; }
svg { display: block; flex: none; }
i { font-style: normal; }
.defs { position: absolute; }

.desktop {
  position: relative; width: 1440px; height: 900px; overflow: hidden;
  display: flex; flex-direction: column;
  background:
    linear-gradient(to top, #12002e 0, #1c0040 96px, transparent 112px),
    linear-gradient(180deg, #3a0092 0, #360082 45%, #2c0060 85%, #1a0036 100%);
}
.desktop::after {
  content: ""; position: absolute; left: 0; right: 0; bottom: 0; height: 5px;
  background: linear-gradient(90deg, #0f001e 0, #16003a 40%, #1c0046 64%, #3f005a 66%, #4a0064 78%, #1c0040 92%, #17003a 100%);
}
.file-label { position: absolute; left: 1411px; color: #ece4f5; font-size: 12px; font-weight: 600; line-height: 14px; text-shadow: 0 1px 2px #000; letter-spacing: -.2px; }
.file-label-1 { top: 121px; }
.file-label-2 { top: 233px; }

/* windows stacked behind the browser */
.slack-window {
  position: absolute; left: 900px; top: 38px; width: 517px; height: 768px;
  background: #1b0318; border: 1px solid #000; border-radius: 10px;
  box-shadow: inset 0 0 0 1px #4d3a4b, 0 8px 24px rgba(0,0,0,.45);
  padding: 38px 4px 3px 0;
}
.help { position: absolute; right: 10px; top: 10px; width: 18px; height: 18px; }
.slack-pane { height: 100%; background: #090b0d; border: 1px solid #1a171c; border-radius: 6px; padding-top: 11px; }
.slack-pane i { display: block; }
.pane-a { height: 28px; width: 499px; border: 1px solid #1a1b1d; border-radius: 8px; }
.pane-b { margin-top: 11px; height: 37px; border: solid #1a1b1d; border-width: 1px 0; }
.pane-c { margin-top: 317px; height: 1px; background: #1a1b1d; }
.under-window {
  position: absolute; left: 0; top: 800px; width: 1343px; height: 30px;
  background: #0a0a0b; border: 1px solid #29222f; border-radius: 0 0 10px 0;
}
.under-window i { position: absolute; left: 320px; bottom: 0; width: 34px; height: 20px; background: #073c73; border-radius: 0 0 0 8px; }

/* menu bar */
.menubar {
  height: 24px; display: flex; align-items: center; padding: 0 19px 1px 19px;
  background: linear-gradient(90deg, #5a00a4 0, #4f00ae 25%, #4400b4 55%, #4200ae 80%, #3f00a2 100%);
  color: #f4edfc; font-size: 13px; font-weight: 500; white-space: nowrap;
  text-shadow: 0 1px 2px rgba(0,0,0,.3);
}
.apple-logo { width: 15px; height: 16px; margin-right: 19px; }
.menus { display: flex; gap: 21px; letter-spacing: -.1px; }
.menus b { font-weight: 700; letter-spacing: .05px; }
.m-chrome { width: 50px; } .m-file { width: 21px; } .m-edit { width: 23px; } .m-view { width: 29px; }
.m-history { width: 43px; letter-spacing: -.2px; } .m-bookmarks { width: 67px; letter-spacing: -.3px; } .m-profiles { width: 45px; letter-spacing: -.2px; } .m-tab { width: 21px; } .m-window { width: 48px; letter-spacing: -.3px; }
.status { margin-left: auto; display: flex; align-items: center; padding-top: 1px; }
.zoom-word { width: 41px; font-size: 15px; line-height: 20px; margin: -3px 15px 0 0; letter-spacing: -.2px; }
.zoom-word span { display: inline-block; transform: scale(1.04, .92); transform-origin: 0 70%; }
.battery { width: 26px; height: 12px; margin-right: 18px; }
.wifi { width: 17px; height: 12px; margin-right: 18px; }
.search { width: 14px; height: 14px; margin: 0 12px 0 -1px; }
.control { width: 14px; height: 14px; margin: 0 5px 0 1px; }
.mic-dot { width: 5px; height: 5px; border-radius: 50%; background: #e07b20; margin: 2px 12px 0 0; }
.siri-mini { width: 14px; height: 14px; margin-right: 16px; }
.date { width: 74px; margin-top: -2px; }
.time { width: 51px; margin-top: -2px; letter-spacing: -.25px; }

/* browser window */
.browser {
  position: relative; width: 1390px; height: 799px; margin-top: 1px;
  display: flex; flex-direction: column; overflow: hidden;
  border-radius: 10px; background: #1f2020;
  box-shadow: 0 0 0 1px #000, 0 12px 24px rgba(0,0,0,.5);
}
.browser::after { content: ""; position: absolute; inset: 0; border-radius: 10px; border: 1px solid rgba(255,255,255,.2); border-bottom: 0; pointer-events: none; }
.tabstrip { height: 40px; display: flex; align-items: center; padding-left: 21px; background: #1f2221; }
.lights { display: flex; gap: 8px; width: 70px; }
.lights i { width: 12px; height: 12px; border-radius: 50%; }
.red { background: #ff4a42; } .yellow { background: #ffb900; } .green { background: #00d427; }
.tabs { display: flex; align-self: stretch; }
.tab { position: relative; width: 107px; display: flex; align-items: center; padding-left: 9px; color: #c9cbca; font-size: 12px; font-weight: 500; letter-spacing: -.1px; }
.tab.wide { width: 108px; }
.tab::after { content: ""; position: absolute; right: 1px; top: 12px; width: 2px; height: 16px; background: #3f4140; }
.tab.plain::after { display: none; }
.fav { width: 16px; height: 16px; }
.title { width: 45px; height: 16px; margin: 0 4px 0 8px; line-height: 16px; overflow: hidden; white-space: nowrap; -webkit-mask-image: linear-gradient(90deg, #000 24px, transparent 39px); mask-image: linear-gradient(90deg, #000 24px, transparent 39px); }
.wide .title { width: 46px; }
.x { width: 10px; height: 10px; margin-left: -1px; }
.tab.active { color: #e8e8e8; }
.tab.active::before { content: ""; position: absolute; left: 1px; top: 6px; width: 101px; height: 34px; background: #3c3c3c; border-radius: 10px 10px 0 0; z-index: 0; }
.tab.active::after { left: -9px; top: 30px; right: auto; width: 121px; height: 10px; background:
  radial-gradient(circle at 0 0, transparent 9.5px, #3c3c3c 10px) 0 0 / 10px 10px no-repeat,
  radial-gradient(circle at 100% 0, transparent 9.5px, #3c3c3c 10px) 100% 0 / 10px 10px no-repeat; }
.active > * { position: relative; z-index: 1; }
.plus { width: 12px; height: 12px; margin-left: 9px; }
.tab-search { width: 28px; height: 28px; margin: -1px 6px 0 auto; border-radius: 9px; background: #3c3c3c; display: flex; align-items: center; justify-content: center; }
.tab-search svg { width: 10px; height: 6px; margin-top: 1px; }
.toolbar { height: 47px; flex: none; display: flex; align-items: center; background: #3c3c3c; border-bottom: 1px solid #4b4c4c; border-radius: 10px 10px 0 0; padding: 0 20px 0 14px; }
.toolbar > * { flex: none; }
.ti { width: 16px; height: 16px; margin-right: 20px; }
.reload { margin-right: 17px; }
.omnibox { width: 1098px; height: 36px; border: 2px solid #5b92f5; border-radius: 18px; display: flex; align-items: center; padding: 0 15px 0 9px; }
.info { width: 14px; height: 14px; margin-right: 13px; }
.url { color: #c4c4c4; font-size: 14px; letter-spacing: -.05px; flex: 1; margin-top: -2px; }
.url em { color: #ececec; font-style: normal; }
.star { width: 16px; height: 16px; }
.puzzle { width: 18px; height: 18px; margin: -2px 16px 0 17px; }
.tb-sep { width: 2px; height: 16px; background: #5c5c5c; margin-right: 19px; }
.panel { width: 15px; height: 15px; margin-right: 18px; }
.avatar { width: 20px; height: 20px; border-radius: 50%; background: #ff0d77; color: #fff; font-size: 11px; line-height: 20px; text-align: center; margin-right: 22px; }
.dots { width: 4px; height: 16px; margin-left: 2px; }

/* task board page */
.page { flex: 1; background: linear-gradient(180deg, #aec3e2 94%, #9fb2cf 100%); color: #212529; font-size: 16px; line-height: 24px; }
.navbar { height: 56px; background: #212529; color: #fff; display: flex; align-items: center; padding-left: 12px; gap: 16px; white-space: nowrap; font-weight: 450; }
.brand { font-size: 20px; width: 96px; letter-spacing: -.95px; }
.hello { color: #ffc107; width: 58px; letter-spacing: -.05px; }
.n-all { width: 63px; letter-spacing: -.5px; }
.n-add { width: 67px; letter-spacing: -.5px; }
.n-out { letter-spacing: -.5px; }
.container { width: 1140px; margin: 0 0 0 125px; padding: 0 12px; }
h1 { margin: 0 0 8px; font-size: 40px; line-height: 48px; padding-top: 1px; height: 48px; font-weight: 550; letter-spacing: -2.1px; }
ul { margin: 0 0 32px; padding-left: 32px; }
li { letter-spacing: -.25px; }
strong { font-weight: 700; display: block; letter-spacing: -.2px; }
.desc { letter-spacing: -.4px; }
.due { letter-spacing: -.2px; }
p { margin: 0 0 16px; }
.actions { display: flex; align-items: center; gap: 4px; height: 30px; }
.edit { color: #1a5cff; text-decoration: underline; width: 28px; }
.delete { width: 63px; height: 30px; padding: 0; border: 2px outset #1a1a1a; border-color: #767676 #212121 #212121 #767676; background: #efefef; color: #000; font: inherit; letter-spacing: -.3px; white-space: nowrap; }
.buttons { display: flex; gap: 4px; }
.btn { height: 38px; border-radius: 6px; color: #fff; line-height: 38px; font-weight: 450; text-align: center; letter-spacing: -.5px; white-space: nowrap; }
.primary { width: 148px; background: #1259ff; }
.secondary { width: 189px; background: #6c757d; }

/* dock */
.dock {
  position: absolute; left: 43px; top: 832px; width: 1354px; height: 63px;
  display: flex; padding-left: 2px; border-radius: 19px; border: 1px solid #54426c;
  background: linear-gradient(90deg, #241238 0, #28113e 45%, #2c0e50 60%, #4b0f63 70%, #571078 77%, #431161 85%, #2b1247 93%, #25103d 100%);
  z-index: 2;
}
.app { position: relative; width: 52.06px; flex: none; padding: 8px 0 0 6px; }
.app > svg { width: 40px; height: 40px; overflow: visible; }
.app.run::after { content: ""; position: absolute; left: 24px; top: 56px; width: 4px; height: 4px; border-radius: 1.5px; background: #c493e2; }
.app:first-child::after { background: #9c8db0 !important; }
.sep { width: 1px; height: 47px; margin: 7px 11px 0; background: #75518d; flex: none; }
.sep-b { margin-left: 12px; margin-right: 11px; background: #5f4a78; }
.app > .big { width: 44px; height: 48px; margin: -5px 0 0 -3px; }
.app > .thumb { width: 46px; height: 40px; margin-left: -4px; }
.app > .bin { width: 36px; height: 46px; margin: -4px 0 0 2px; }
.badge { position: absolute; left: 32px; top: 4px; width: 18px; height: 18px; border-radius: 50%; background: #fb1118; color: #fff; font-size: 11px; font-weight: 500; line-height: 18px; text-align: center; }
.cal-m { font-size: 7.5px; font-weight: 600; fill: #fff; text-anchor: middle; }
.cal-d { font-size: 24px; font-weight: 300; fill: #333; text-anchor: middle; letter-spacing: -1px; }
.tv { font-size: 16px; font-weight: 500; fill: #fff; letter-spacing: -.4px; }
.term { font: 9.5px "Liberation Mono", monospace; font-weight: 700; fill: #e8e8e8; }
.zoom-app { font-size: 9.500px; font-weight: 600; fill: #fff; text-anchor: middle; }
.petals ellipse { mix-blend-mode: multiply; }
```
